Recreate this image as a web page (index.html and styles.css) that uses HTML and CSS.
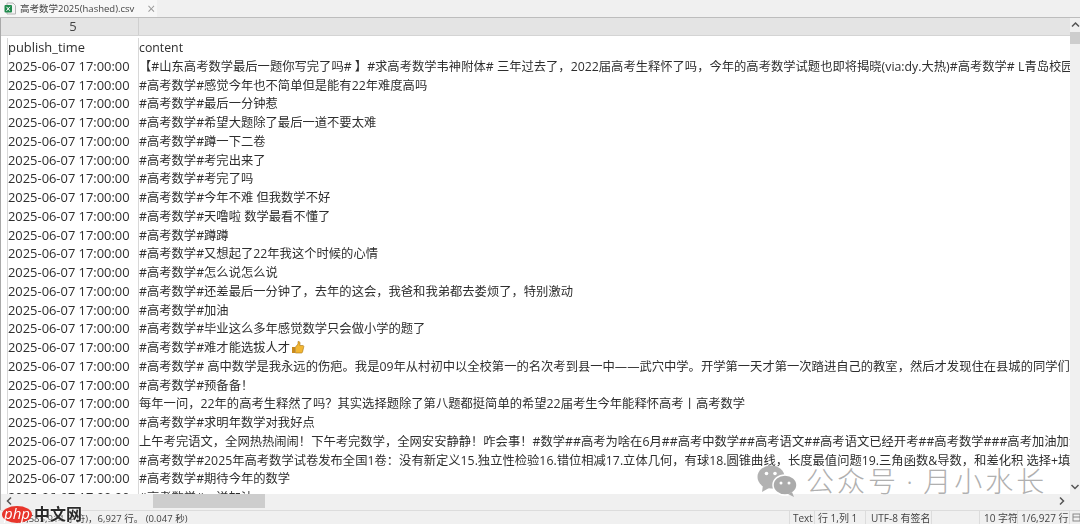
FILE: index.html
```
<!DOCTYPE html>
<html lang="zh-CN">
<head>
<meta charset="utf-8">
<title>高考数学2025(hashed).csv</title>
<link rel="stylesheet" href="styles.css">
</head>
<body>
<div class="app">
  <div class="tabbar">
    <div class="tab">
      <svg class="xls" width="12" height="13" viewBox="0 0 12 13"><path d="M3 1h6l2.500 2.500V12H3z" fill="#f4f4f4" stroke="#b5b5b5"/><rect x="0.500" y="3" width="7.500" height="7.500" rx="1" fill="#1f8a4c"/><path d="M2.500 4.800l3.400 4M5.900 4.800l-3.400 4" stroke="#fff" stroke-width="1"/></svg>
      <span class="tabname">高考数学2025(hashed).csv</span>
      <span class="tabclose">×</span>
    </div>
  </div>
  <div class="sheet">
    <div class="main">
      <div class="heads">
        <div class="head h1">5</div>
        <div class="head h2"></div>
      </div>
      <div class="rows">
        <div class="row"><span class="t">publish_time</span><span class="c">content</span></div>
        <div class="row"><span class="t">2025-06-07 17:00:00</span><span class="c">【#山东高考数学最后一题你写完了吗# 】#求高考数学韦神附体# 三年过去了&#xFF0C;2022届高考生释怀了吗&#xFF0C;今年的高考数学试题也即将揭晓(via:dy.大热)#高考数学# L青岛校园</span></div>
        <div class="row"><span class="t">2025-06-07 17:00:00</span><span class="c">#高考数学#感觉今年也不简单但是能有22年难度高吗</span></div>
        <div class="row"><span class="t">2025-06-07 17:00:00</span><span class="c">#高考数学#最后一分钟惹</span></div>
        <div class="row"><span class="t">2025-06-07 17:00:00</span><span class="c">#高考数学#希望大题除了最后一道不要太难</span></div>
        <div class="row"><span class="t">2025-06-07 17:00:00</span><span class="c">#高考数学#蹲一下二卷</span></div>
        <div class="row"><span class="t">2025-06-07 17:00:00</span><span class="c">#高考数学#考完出来了</span></div>
        <div class="row"><span class="t">2025-06-07 17:00:00</span><span class="c">#高考数学#考完了吗</span></div>
        <div class="row"><span class="t">2025-06-07 17:00:00</span><span class="c">#高考数学#今年不难 但我数学不好</span></div>
        <div class="row"><span class="t">2025-06-07 17:00:00</span><span class="c">#高考数学#天噜啦 数学最看不懂了</span></div>
        <div class="row"><span class="t">2025-06-07 17:00:00</span><span class="c">#高考数学#蹲蹲</span></div>
        <div class="row"><span class="t">2025-06-07 17:00:00</span><span class="c">#高考数学#又想起了22年我这个时候的心情</span></div>
        <div class="row"><span class="t">2025-06-07 17:00:00</span><span class="c">#高考数学#怎么说怎么说</span></div>
        <div class="row"><span class="t">2025-06-07 17:00:00</span><span class="c">#高考数学#还差最后一分钟了&#xFF0C;去年的这会&#xFF0C;我爸和我弟都去娄烦了&#xFF0C;特别激动</span></div>
        <div class="row"><span class="t">2025-06-07 17:00:00</span><span class="c">#高考数学#加油</span></div>
        <div class="row"><span class="t">2025-06-07 17:00:00</span><span class="c">#高考数学#毕业这么多年感觉数学只会做小学的题了</span></div>
        <div class="row"><span class="t">2025-06-07 17:00:00</span><span class="c">#高考数学#难才能选拔人才<svg class="thumb" width="14" height="14" viewBox="0 0 14 14"><path d="M1 7h3v6H1z" fill="#c98a1c"/><path d="M4.500 7l2.500-3V1.500c1.500-.5 2.300.8 2 2.500L8.800 5.500h3c1 0 1.200 1 .9 1.700l-1.200 5c-.2.600-.6.800-1.200.8H4.500z" fill="#f2b632" stroke="#a87412" stroke-width=".6"/></svg></span></div>
        <div class="row"><span class="t">2025-06-07 17:00:00</span><span class="c">#高考数学# 高中数学是我永远的伤疤。我是09年从村初中以全校第一的名次考到县一中——武穴中学。开学第一天才第一次踏进自己的教室&#xFF0C;然后才发现住在县城的同学们</span></div>
        <div class="row"><span class="t">2025-06-07 17:00:00</span><span class="c">#高考数学#预备备&#xFF01;</span></div>
        <div class="row"><span class="t">2025-06-07 17:00:00</span><span class="c">每年一问&#xFF0C;22年的高考生释然了吗&#xFF1F;其实选择题除了第八题都挺简单的希望22届考生今年能释怀高考丨高考数学</span></div>
        <div class="row"><span class="t">2025-06-07 17:00:00</span><span class="c">#高考数学#求明年数学对我好点</span></div>
        <div class="row"><span class="t">2025-06-07 17:00:00</span><span class="c">上午考完语文&#xFF0C;全网热热闹闹&#xFF01;下午考完数学&#xFF0C;全网安安静静&#xFF01;咋会事&#xFF01;#数学##高考为啥在6月##高考中数学##高考语文##高考语文已经开考##高考数学###高考加油加油</span></div>
        <div class="row"><span class="t">2025-06-07 17:00:00</span><span class="c">#高考数学#2025年高考数学试卷发布全国1卷&#xFF1A;没有新定义15.独立性检验16.错位相减17.立体几何&#xFF0C;有球18.圆锥曲线&#xFF0C;长度最值问题19.三角函数&amp;导数&#xFF0C;和差化积 选择+填</span></div>
        <div class="row"><span class="t">2025-06-07 17:00:00</span><span class="c">#高考数学#期待今年的数学</span></div>
        <div class="row"><span class="t">2025-06-07 17:00:00</span><span class="c">#高考数学#一送加油</span></div>
      </div>
      <div class="hscroll">
        <svg class="arrow" width="16" height="14" viewBox="0 0 16 14"><path d="M10 3.500L6.500 7l3.500 3.500" fill="none" stroke="#555" stroke-width="1.500"/></svg>
        <div class="track"><div class="hthumb"></div></div>
        <svg class="arrow" width="16" height="14" viewBox="0 0 16 14"><path d="M6 3.500L9.500 7 6 10.500" fill="none" stroke="#555" stroke-width="1.500"/></svg>
      </div>
    </div>
    <div class="vscroll">
      <svg class="varrow" width="10" height="14" viewBox="0 0 10 14"><path d="M2 8.500L5.500 5 9 8.500" fill="none" stroke="#555" stroke-width="1.500"/></svg>
      <div class="vthumb"></div>
      <svg class="varrow down" width="10" height="14" viewBox="0 0 10 14"><path d="M1.500 5L5 8.500 8.500 5" fill="none" stroke="#555" stroke-width="1.500"/></svg>
    </div>
  </div>
  <div class="status">
    <span class="s-left">(4,585,914 字符)&#xFF0C;6,927 行。 (0.047 秒)</span>
    <span class="s-item s-text">Text</span>
    <span class="s-item s-pos">行 1,列 1</span>
    <span class="s-item s-enc">UTF-8 有签名</span>
    <span class="s-item s-gap"></span>
    <span class="s-item s-len">10 字符</span>
    <span class="s-item s-line">1/6,927 行</span>
    <span class="s-item s-end"><svg width="9" height="9" viewBox="0 0 9 9"><rect x="1" y="1" width="7" height="7" fill="none" stroke="#888"/><path d="M1 4h7" stroke="#888"/></svg></span>
  </div>
</div>
<div class="wm">
  <svg width="42" height="32" viewBox="0 0 42 32"><ellipse cx="14" cy="12" rx="13.500" ry="11.500" fill="#b2b2b2"/><path d="M6 20l-1 7 7-4z" fill="#b2b2b2"/><ellipse cx="28" cy="20" rx="12" ry="10" fill="#ababab" stroke="#fff" stroke-width="1.500"/><path d="M35 27l2 5-6-3z" fill="#ababab"/><circle cx="9.500" cy="8.500" r="1.800" fill="#fff"/><circle cx="18" cy="8.500" r="1.800" fill="#fff"/><circle cx="24" cy="18" r="1.500" fill="#fff"/><circle cx="32" cy="18" r="1.500" fill="#fff"/></svg>
  <span>公众号 · 月小水长</span>
</div>
<div class="php"><span class="php-en">php</span><span class="php-cn">中文网</span></div>
</body>
</html>
```
FILE: styles.css
```
* { box-sizing: border-box; }
html, body { margin: 0; height: 100%; overflow: hidden; background: #fff; }
body { font-family: "Open Sans", "Noto Sans CJK SC", sans-serif; font-size: 13px; color: #2e2e2e; }
.app { display: flex; flex-direction: column; height: 524px; width: 1080px; filter: blur(.3px); }
.tabbar { height: 18px; background: #f0f0f0; border-bottom: 1px solid #bdbdbd; display: flex; }
.tab { width: 157px; background: #f7f7f7; display: flex; align-items: center; padding-left: 4px; }
.xls { flex: none; }
.tabname { font-size: 9.500px; margin-left: 4px; color: #444; white-space: nowrap; line-height: 17px; }
.tabclose { margin-left: 13px; color: #999; font-size: 14px; line-height: 17px; }
.sheet { flex: 1; display: flex; min-height: 0; border-left: 1px solid #a9a9a9; }
.main { flex: 1; min-width: 0; display: flex; flex-direction: column; }
.heads { height: 18px; display: flex; background: #e4e4e4; border-bottom: 1px solid #d4d4d4; flex: none; }
.head { height: 17px; line-height: 17px; text-align: center; color: #444; }
.h1 { width: 138px; border-right: 1px solid #cfcfcf; padding-left: 7px; font-size: 13px; }
.h2 { flex: 1; }
.rows { flex: 1; min-height: 0; overflow: hidden; padding-left: 6px; padding-top: 2px; }
.row { height: 18.760px; display: flex; align-items: baseline; line-height: 18.760px; white-space: nowrap; }
.t { width: 132px; height: 18.760px; flex: none; border-left: 1px solid #d8d8d8; border-right: 1px solid #d8d8d8; font-size: 12.900px; }
.c { flex: 1; min-width: 0; overflow: hidden; font-size: 12.300px; }
.thumb { vertical-align: -2px; margin-left: 1px; }
.hscroll { height: 16px; flex: none; background: #f0f0f0; display: flex; align-items: flex-start; }
.arrow { flex: none; }
.track { flex: 1; height: 16px; }
.hthumb { width: 112px; height: 14px; margin-left: 136px; background: #cdcdcd; }
.vscroll { width: 10px; flex: none; background: #f0f0f0; display: flex; flex-direction: column; align-items: center; padding-bottom: 16px; }
.varrow { flex: none; }
.vthumb { width: 10px; height: 12px; background: #cdcdcd; }
.down { margin-top: auto; }
.status { height: 14px; flex: none; background: #f0f0f0; border-top: 1px solid #dcdcdc; display: flex; font-size: 10px; line-height: 15px; color: #444; white-space: nowrap; overflow: hidden; }
.s-left { width: 789px; padding-left: 18px; flex: none; font-size: 9.500px; }
.s-item { border-left: 1px solid #dcdcdc; flex: none; }
.s-text { width: 25px; padding-left: 3px; }
.s-pos { width: 51px; padding-left: 3px; }
.s-enc { width: 66px; padding-left: 5px; }
.s-gap { width: 48px; }
.s-len { width: 38px; padding-left: 4px; }
.s-line { width: 52px; padding-left: 3px; }
.s-end { flex: 1; padding-left: 2px; }
.wm { position: absolute; left: 757px; top: 465px; display: flex; align-items: center; gap: 7px; font-size: 28px; font-weight: 300; letter-spacing: 3px; word-spacing: -3px; line-height: 30px; color: #b0b0b0; white-space: nowrap; }
.php { position: absolute; left: 2px; top: 506px; display: flex; align-items: center; filter: blur(.3px); }
.php-en { background: #e8352b; color: #fff; font-size: 15px; font-style: italic; line-height: 14px; height: 17px; width: 30px; border-radius: 50%; text-align: center; }
.php-cn { color: #2a2a2a; font-size: 16px; font-weight: 700; line-height: 17px; margin-left: 2px; text-shadow: 0 0 2px #fff, 0 0 2px #fff; }
```
